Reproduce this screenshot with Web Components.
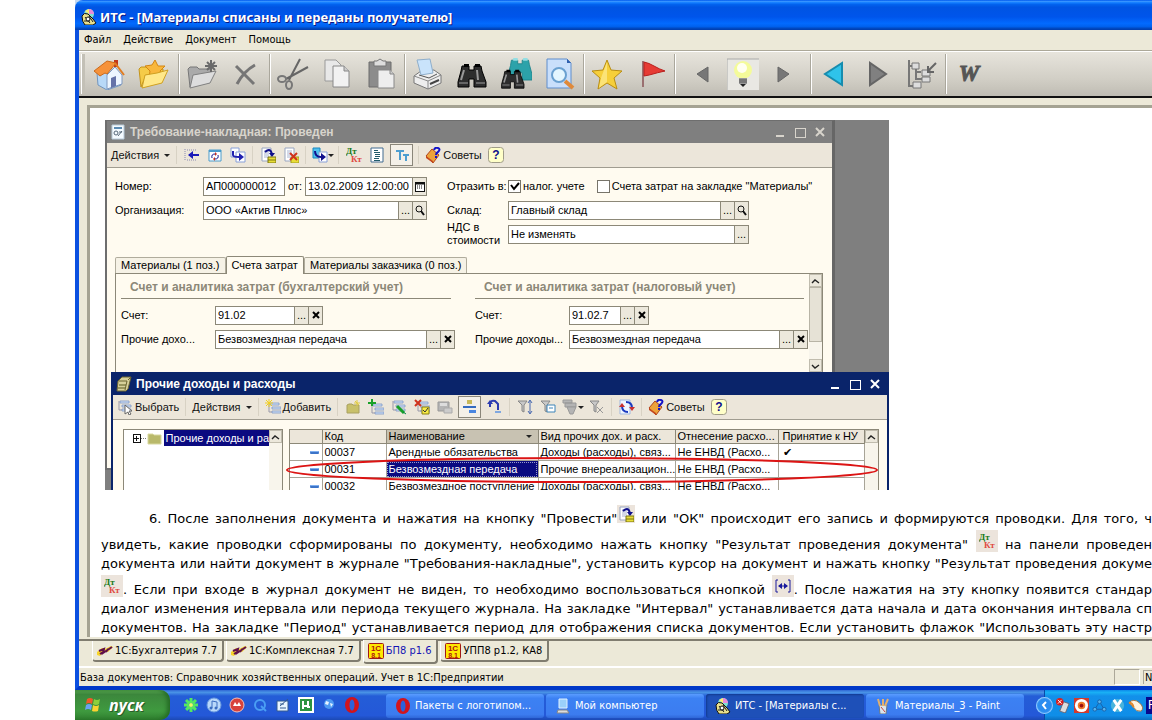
<!DOCTYPE html>
<html lang="ru">
<head>
<meta charset="utf-8">
<title>ИТС - [Материалы списаны и переданы получателю]</title>
<style>
  body {
    margin: 0;
    background: #fff;
    overflow: hidden;
  }
</style>
</head>
<body>
<its-desktop>
  <its-window>
    <its-toolbar slot="toolbar"></its-toolbar>
    <its-article>
      <demo-screen>
        <c1-window slot="back" icon="form" caption="Требование-накладная: Проведен">
          <c1-tools slot="tools">
            <c1-tool label="Действия" arrow></c1-tool><hr>
            <c1-tool icon="back" title="Назад"></c1-tool>
            <c1-tool icon="reread" title="Перечитать"></c1-tool>
            <c1-tool icon="copydoc" title="Скопировать"></c1-tool><hr>
            <c1-tool icon="post" title="Провести"></c1-tool>
            <c1-tool icon="unpost" title="Отмена проведения"></c1-tool><hr>
            <c1-tool icon="basis" title="Ввести на основании" arrow></c1-tool><hr>
            <c1-tool icon="dtkt" title="Результат проведения"></c1-tool>
            <c1-tool icon="list" title="Журнал"></c1-tool>
            <c1-tool icon="tt" title="Настройка" active></c1-tool><hr>
            <c1-tool icon="advice" label="Советы"></c1-tool>
            <c1-tool icon="help" title="Справка"></c1-tool>
          </c1-tools>
          <invoice-form></invoice-form>
        </c1-window>
        <c1-window slot="front" icon="book" caption="Прочие доходы и расходы" current>
          <c1-tools slot="tools">
            <c1-tool icon="choose" label="Выбрать"></c1-tool><hr>
            <c1-tool label="Действия" arrow></c1-tool><hr>
            <c1-tool icon="addrow" label="Добавить"></c1-tool><hr>
            <c1-tool icon="newfolder" title="Новая группа"></c1-tool>
            <c1-tool icon="addcopy" title="Добавить копированием"></c1-tool>
            <c1-tool icon="edit" title="Изменить"></c1-tool>
            <c1-tool icon="mark" title="Пометить на удаление"></c1-tool>
            <c1-tool icon="save" title="Записать"></c1-tool>
            <c1-tool icon="tree" title="Иерархия" active></c1-tool>
            <c1-tool icon="move" title="Переместить"></c1-tool><hr>
            <c1-tool icon="filtersort" title="Отбор и сортировка"></c1-tool>
            <c1-tool icon="filterval" title="Отбор по значению"></c1-tool>
            <c1-tool icon="filterhist" title="История отборов" arrow></c1-tool>
            <c1-tool icon="filteroff" title="Отключить отбор"></c1-tool><hr>
            <c1-tool icon="refresh" title="Обновить"></c1-tool><hr>
            <c1-tool icon="advice" label="Советы"></c1-tool>
            <c1-tool icon="help" title="Справка"></c1-tool>
          </c1-tools>
          <income-list></income-list>
        </c1-window>
      </demo-screen>
    </its-article>
    <its-tabs slot="tabs"></its-tabs>
  </its-window>
  <xp-taskbar slot="taskbar"></xp-taskbar>
</its-desktop>

<script>
// Icons: [viewBox size, markup]
const FUNNEL = `<path d="M1 2h9L7 6v7l-2-1V6z" fill="#c8c8c8" stroke="#888"/>`;
const ROWS = `<path d="M3 2h9v2H3zM5 6h9v2H5zM5 10h9v2H5z" fill="#cfe0f6" stroke="#7f97c6" stroke-width=".8"/><path d="M2 2v9h3" fill="none" stroke="#99a"/>`;
const SHEET = `<path d="M2 1h9v13H2z" fill="#fff" stroke="#99a6c0"/><path d="M4 4h5M4 6h5M4 8h5M4 10h5" stroke="#a9b4d0"/>`;
const BINOC = `<path d="M6 8h7v4h5V8h7l1 5 4 11v5H18v-8h-5v8H2v-5l3-11z" fill="#2d2d2d" stroke="#000"/><path d="M8 6h5v3H8zM19 6h5v3h-5z"/><path d="M5 22l3-10M22 22l-1-10" stroke="#999" stroke-width="2"/><path d="M3 25h9M20 25h9" stroke="#666" stroke-width="2"/>`;
const DETECTIVE = `<circle cx="8" cy="5" r="5" fill="#7fe0d0"/><path d="M8 0a5 5 0 0 1 5 5H8z" fill="#e98ad8"/><path d="M8 0v5L4 2z" fill="#ffec70"/><path d="M1 7q2-4 6-2l5 5 3 4-3 2H4q-3-3-3-9z" fill="#e8df8c" stroke="#111"/><path d="M4 8l5 6M8 7l4 6M3 12h6" stroke="#222"/><circle cx="7" cy="10" r="2" fill="#fff" stroke="#111"/>`;

const ICONS = {
  its: [16, DETECTIVE],
  home: [32, `<path d="M4 15l13-5 11 6v11l-14 5-9-5z" fill="#b8d9f8" stroke="#7295bd"/><path d="M14 17l8-8 7 8v9l-15 5z" fill="#eef6ff" stroke="#8099c0"/><path d="M21 2h4v7h-4z" fill="#c2371b"/><path d="M1 13L14 3l9 2-9 11-2-1-5 3z" fill="#f6923a" stroke="#cc6a1a"/><path d="M22 5l9 12" stroke="#e07c22" stroke-width="2"/><path d="M18 20l5-2v10l-5 2z" fill="#6673a8"/>`],
  favorites: [32, `<path d="M2 11l2-2h7l2 2h13v6H9L4 29z" fill="#f5cb48" stroke="#c4941c"/><path d="M18 2l3 6h7l-5 5 3 6-8-3-6 4 1-7-5-5 7-1z" fill="#f8b73c" stroke="#d48612"/><path d="M8 17l12-2 11-3-6 13-20 5z" fill="#ffe889" stroke="#d0a020"/>`],
  newfolder32: [32, `<path d="M2 11l2-2h7l2 2h12v6H9L4 29z" fill="#aaa" stroke="#777"/><path d="M7 17l23-4-6 12-20 5z" fill="#ddd" stroke="#808080"/><path d="M25 2v12M19 8h12M21 4l8 8M29 4l-8 8" stroke="#6a6a6a" stroke-width="2"/>`],
  remove: [32, `<path d="M6 8q8 8 18 18M25 7Q14 13 7 26" stroke="#767676" stroke-width="3" fill="none"/>`],
  cut: [32, `<path d="M23 1L12 22M31 9L9 21" stroke="#666" stroke-width="2"/><ellipse cx="5" cy="21" rx="4" ry="3" fill="none" stroke="#777" stroke-width="2"/><ellipse cx="12" cy="27" rx="3" ry="4" fill="none" stroke="#777" stroke-width="2"/>`],
  copy: [32, `<path d="M4 2h11l5 5v16H4z" fill="#e8e8e8" stroke="#999"/><path d="M12 8h11l5 5v16H12z" fill="#f2f2f2" stroke="#888"/><path d="M23 8v5h5" fill="#ccc" stroke="#888"/>`],
  paste: [32, `<path d="M4 4h22v25H4z" fill="#8c8c8c" stroke="#6d6d6d"/><path d="M9 3h3l3-2 3 2h3v5H9z" fill="#ddd" stroke="#777"/><path d="M13 12h12l4 4v14H13z" fill="#eee" stroke="#888"/><path d="M25 12v4h4" fill="#ccc" stroke="#888"/>`],
  print: [32, `<path d="M2 18l7-5 13-1 7 5v8l-13 6-14-6z" fill="#eee" stroke="#777"/><path d="M5 2l13-1 3 14-12 2z" fill="#c9e3fb" stroke="#8eaecb"/><path d="M2 18l14 5 13-6M16 23v8" fill="none" stroke="#888"/><path d="M7 17l10 3 8-4" stroke="#555" fill="none"/><path d="M18 26l9-4" stroke="#444" stroke-width="2"/>`],
  find: [32, BINOC],
  findall: [32, `<g transform="translate(6,-5) scale(.9)" opacity=".9"><path d="M6 8h7v4h5V8h7l1 5 3 11v6H18v-8h-5v8H2v-5l3-11z" fill="#1a9da6" stroke="#0a7c86"/><path d="M8 7h5M19 7h5" stroke="#8be0e6" stroke-width="3"/></g><g transform="translate(0,7) scale(.8)">${BINOC}</g>`],
  preview: [32, `<path d="M3 1h20l4 4v25H3z" fill="#c9dffb" stroke="#5f8dcc"/><path d="M23 1v4h4z" fill="#2f5fae"/><circle cx="15" cy="17" r="7" fill="#e4f6ff" stroke="#6aa0d0" stroke-width="2"/><path d="M21 23l8 7" stroke="#e08a3a" stroke-width="4"/>`],
  star: [32, `<path d="M16 2l4 10 11 1-8 7 3 11-10-6-9 6 2-11-8-7 11-1z" fill="#f6cf3a" stroke="#b98d12"/><path d="M16 4v20l-8 6 2-10z" fill="#fff0a0" opacity=".6"/>`],
  flag: [32, `<path d="M8 3v26" stroke="#9a7070" stroke-width="2"/><path d="M9 4q5 1 10 4 5 3 11 5-9 2-12 3t-9 2z" fill="#e63b34" stroke="#b81f1d"/>`],
  prev: [32, `<path d="M21 9v15L10 16z" fill="#777" stroke="#666"/>`],
  bulb: [32, `<path d="M0 1h32v31H0z" fill="#e9e8e3"/><path d="M0 32V1h32" fill="none" stroke="#aaa"/><circle cx="16" cy="12" r="9" fill="#f4fb9a"/><circle cx="15" cy="10" r="5" fill="#fffff0"/><path d="M12 20h8v6h-8z" fill="#9a9a9a"/><path d="M12 22h8M12 24h8" stroke="#555"/><path d="M13 26h6l-3 3z" fill="#222"/>`],
  next: [32, `<path d="M11 9v15l11-8z" fill="#777" stroke="#666"/>`],
  goback: [32, `<path d="M24 5v22L7 16z" fill="#2fc3ea" stroke="#168cae" stroke-width="2"/>`],
  goforward: [32, `<path d="M8 5v22l16-11z" fill="#808080" stroke="#656565" stroke-width="2"/>`],
  sync: [32, `<path d="M3 2v26h5M3 8h4M10 11v10h6M10 14h5" fill="none" stroke="#777" stroke-width="2"/><path d="M6 5h7v6H6zM16 12h8v6h-8zM16 19h8v5h-8zM7 24h8v6H7z" fill="#ddd" stroke="#777"/><path d="M30 5l-8 8M22 8v6h6" stroke="#666" stroke-width="2" fill="none"/>`],
  word: [32, `<text x="16" y="23" text-anchor="middle" font-family="Liberation Serif, serif" font-weight="bold" font-style="italic" font-size="23" fill="#555" stroke="#555">W</text>`],
  form: [16, `<path d="M2 1h12v14H2z" fill="#f4faff" stroke="#b8cad8"/><path d="M4 4h8" stroke="#5b8bb3" stroke-width="2"/><circle cx="6" cy="9" r="2" fill="none" stroke="#567"/><path d="M8 12l4-5M9 8h3" stroke="#567"/>`],
  book: [16, `<path d="M2 5l4-4h9l-3 12-2 2H1z" fill="#d6d09a" stroke="#6b6430"/><path d="M3 5h8L9 14M12 4l3-3" stroke="#6b6430" fill="none"/><path d="M3 9h7M2 12h7" stroke="#5b5b20"/>`],
  back: [16, `<path d="M1 2v12M3 3h9M3 13h9" stroke="#8a8ab0" stroke-dasharray="1 1"/><path d="M15 8H5" stroke="#1818b8" stroke-width="2"/><path d="M9 4L4 8l5 4z" fill="#1818b8"/>`],
  reread: [16, `<path d="M2 3h12v11H2z" fill="#fff" stroke="#4a9ccc"/><path d="M2 3h12v2H2z" fill="#4a9ccc"/><path d="M5 11q-1-4 3-4M11 8q1 4-3 4" fill="none" stroke="#14148c"/><path d="M8 5l2 2-2 2zM8 14l-2-2 2-2z" fill="#c03020"/>`],
  copydoc: [16, `<path d="M1 1h8v9H1z" fill="#fff" stroke="#88a0d8"/><path d="M6 5h9v10H6z" fill="#fff" stroke="#88a0d8"/><path d="M3 4v4q0 2 6 2" fill="none" stroke="#2121b0" stroke-width="2"/><path d="M9 6l5 4-5 4z" fill="#2121b0"/>`],
  post: [16, `${SHEET}<path d="M5 5q6-5 7 3" fill="none" stroke="#10108c" stroke-width="2"/><path d="M9 6h6l-3 4z" fill="#10108c"/><path d="M8 10h8v6H8z" fill="#e8de38" stroke="#7a7510"/><path d="M8 13h8" stroke="#7a7510"/>`],
  unpost: [16, `${SHEET}<path d="M8 10h8v6H8z" fill="#e8de38" stroke="#a09a20"/><path d="M7 6l7 7M14 6l-7 7" stroke="#d0321c" stroke-width="2"/>`],
  basis: [16, `<path d="M1 1h7v10H1z" fill="#4fc0ee" stroke="#1a86be"/><path d="M7 5h8v10H7z" fill="#fff" stroke="#88a0d8"/><path d="M3 4q0 6 6 6" fill="none" stroke="#10108c" stroke-width="2"/><path d="M9 6l5 4-5 4z" fill="#10108c"/>`],
  dtkt: [16, `<text x="0" y="7" font-family="Liberation Serif, serif" font-weight="bold" font-size="9" fill="#197a19">Дт</text><text x="5" y="15" font-family="Liberation Serif, serif" font-weight="bold" font-size="9" fill="#e04a42">Кт</text>`],
  list: [16, `<path d="M2 1h12v14H2z" fill="#fff" stroke="#406a90"/><path d="M5 3.500h4M5 5.500h6M6 7.500h5M6 9.500h5M5 11.500h5M5 13.500h6" stroke="#205a6a"/>`],
  tt: [16, `<path d="M2 4h8M6 4v9M9 8h6M12 8v6" stroke="#4d9ed0" stroke-width="2" fill="none"/>`],
  advice: [16, `<path d="M1 9l6-7 7 6-6 8z" fill="#eda23a" stroke="#b0441c"/><path d="M1 9v2l7 5v-2z" fill="#c44820"/><path d="M9 3q1-3 4-2t0 4q-2 1-2 3" fill="none" stroke="#1414c8" stroke-width="2"/><path d="M10 9h2v2h-2z" fill="#1414c8"/>`],
  help: [16, `<rect x=".5" y=".5" width="15" height="15" rx="3" fill="#ffffc8" stroke="#a09c88"/><text x="8" y="12" text-anchor="middle" font-family="Liberation Sans, sans-serif" font-weight="bold" font-size="12" fill="#10108c">?</text>`],
  choose: [16, `${ROWS}<path d="M8 6l7 6h-3l2 3-2 1-1-3-3 2z" fill="#fff" stroke="#666"/>`],
  addrow: [16, `<g transform="translate(2,2)">${ROWS}</g><path d="M4 0v8M0 4h8M1 1l6 6M7 1L1 7" stroke="#f2cf20"/>`],
  newfolder: [16, `<path d="M2 6l2-1h3l1 1h6v8H2z" fill="#c8c06a" stroke="#a8a060"/><path d="M12 1v6M9 4h6M10 2l4 4" stroke="#e0cb40"/>`],
  addcopy: [16, `<g transform="translate(2,3)">${ROWS}</g><path d="M4 0v7M0 4h8" stroke="#18a028" stroke-width="2"/>`],
  edit: [16, `${ROWS}<path d="M6 7l7 7" stroke="#18a028" stroke-width="3"/><path d="M12 13l3 2" stroke="#084"/>`],
  mark: [16, `<g transform="translate(2,1)">${ROWS}</g><path d="M1 1l6 6M7 1L1 7" stroke="#d0321c" stroke-width="2"/><path d="M8 8h7v7H8z" fill="#f8ec48" stroke="#8a8010"/><path d="M9 11l2 2 3-4" stroke="#333" fill="none"/>`],
  save: [16, `<path d="M1 3h11v9H1z" fill="#b5b5b5" stroke="#999"/><path d="M3 4h7v3H3z" fill="#ddd"/><path d="M7 9h8v5H7z" fill="#ccc" stroke="#aaa"/>`],
  tree: [16, `<path d="M5 1h5v4H5z" fill="#c8b958"/><path d="M1 8h13" stroke="#356bc0" stroke-width="2"/><path d="M7 11h7v3H7z" fill="#4a86e0"/>`],
  move: [16, `<path d="M3 8V5q0-4 5-3l3 3v6" fill="none" stroke="#2a3ab0" stroke-width="2"/><path d="M0 5l3-4 3 4z" fill="#2a3ab0"/><path d="M8 12h6v2H8z" fill="#80a8e0"/>`],
  filtersort: [16, `${FUNNEL}<path d="M13 2v12M11 4l2-3 2 3M11 12l2 3 2-3" fill="none" stroke="#4868b0"/>`],
  filterval: [16, `${FUNNEL}<path d="M7 6h8v7H7z" fill="#fff" stroke="#3c84b8"/><path d="M9 9h4" stroke="#3c84b8"/>`],
  filterhist: [16, `<path d="M1 1h9v3H1zM3 4h11v4H3z" fill="#b4b4b4" stroke="#999"/><path d="M5 8h9l-3 7H8z" fill="#b4b4b4" stroke="#999"/>`],
  filteroff: [16, `${FUNNEL}<path d="M8 8l6 6M14 8l-6 6" stroke="#999"/>`],
  refresh: [16, `<path d="M1 1h10v14H1z" fill="#f0f6ff" stroke="#a0b8e0"/><path d="M7 3q6 0 6 6M9 13q-6 0-6-6" fill="none" stroke="#1a3ac0" stroke-width="2"/><path d="M10 8h6l-3 4z" fill="#c83030"/><path d="M0 8h6L3 4z" fill="#c83030"/>`],
  calendar: [11, `<path d="M1 1h9v9H1z" fill="#fff" stroke="#111" shape-rendering="crispEdges"/><path d="M1 2.500h9" stroke="#111" stroke-width="2"/><path d="M3 5h1M5 5h1M7 5h1M3 7h1M5 7h1M7 7h1" stroke="#111"/>`],
  lens: [11, `<circle cx="5" cy="4" r="3" fill="none" stroke="#111"/><path d="M7 6l3 4" stroke="#111" stroke-width="2"/>`],
  up: [11, `<path d="M2 7l3-3 4 3" fill="none" stroke="#222" stroke-width="1.4"/>`],
  down: [11, `<path d="M2 4l3 3 4-3" fill="none" stroke="#222" stroke-width="1.4"/>`],
  folder: [16, `<path d="M2 4h5l1 1h7v9H2z" fill="#b9b96b" stroke="#d8d8a0"/>`],
  period: [16, `<path d="M3 2H1v12h2M13 2h2v12h-2M4 8h8" fill="none" stroke="#1a1a9c"/><path d="M7 5L3 8l4 3zM9 5l4 3-4 3z" fill="#1a1a9c"/>`],
  v77: [16, `<path d="M0 9l5-4 3 1 6-3 2 1-5 5-4-1-4 5-3-1z" fill="#f7d42a"/><path d="M2 8l5-2-1 4 3-2 6-4M3 11l3-2M9 9l2-3" stroke="#60104a" stroke-width="2" fill="none"/>`],
  v81: [16, `<rect x=".5" y=".5" width="15" height="15" rx="1" fill="#ffe800" stroke="#a01818"/><text x="8" y="8" text-anchor="middle" font-family="Liberation Sans, sans-serif" font-weight="bold" font-size="8" fill="#b01010">1С</text><text x="8" y="15" text-anchor="middle" font-family="Liberation Sans, sans-serif" font-weight="bold" font-size="7" fill="#b01010">8.1</text>`],
  windows: [20, `<path d="M3 4q3-2 6 0L8 9Q5 7 2 9z" fill="#f0592a"/><path d="M10 4q3 2 6 0l-1 5q-3 2-6 0z" fill="#8ccf3c"/><path d="M2 10q3-2 6 0l-1 5q-3-2-6 0z" fill="#6aa2f4"/><path d="M9 10q3 2 6 0l-1 6q-3 1-6 0z" fill="#fad230"/>`],
  icq: [16, `<g stroke="#54e860" stroke-width="3" stroke-dasharray="5 4"><path d="M8 1v14M1 8h14M3 3l10 10M13 3L3 13"/></g><circle cx="8" cy="8" r="2" fill="#eaff60"/>`],
  itunes: [16, `<circle cx="8" cy="8" r="7" fill="#b9d8fa" stroke="#6a9ae0"/><path d="M6 11V4l5 1v6" stroke="#3a6cc0" fill="none"/><circle cx="5" cy="11" r="1.500" fill="#3a6cc0"/><circle cx="10" cy="11" r="1.500" fill="#3a6cc0"/>`],
  miranda: [16, `<circle cx="8" cy="8" r="7" fill="#d8423c" stroke="#f4c0b8"/><path d="M4 9l2-4 2 3 2-3 2 4z" fill="#fff"/>`],
  quick: [16, `<circle cx="8" cy="8" r="5" fill="none" stroke="#4a9ef4" stroke-width="2"/><path d="M9 9l5 5" stroke="#4a9ef4" stroke-width="2"/>`],
  desk: [16, `<path d="M2 4h11v10H2z" fill="#e8f4ff" stroke="#345a90"/><path d="M5 9l8-7M5 7h4M5 11h6" stroke="#345a90"/>`],
  utorrent: [16, `<path d="M0 0h16v16H0z" fill="#fff"/><path d="M2 2h12v12H2z" fill="#2c9440"/><path d="M5 4v8M5 9h5M10 4v6h2" fill="none" stroke="#fff" stroke-width="2"/>`],
  earth: [16, `<circle cx="8" cy="7" r="5" fill="#4f9af2"/><path d="M5 4l3 1-1 3-3-1zM9 6l3 1-2 3z" fill="#e8f4ff"/>`],
  opera: [16, `<ellipse cx="8" cy="8" rx="7" ry="8" fill="#d2141c"/><ellipse cx="8" cy="8" rx="2.500" ry="5.500" fill="#2b62dc"/>`],
  computer: [16, `<path d="M4 1h8v9H4z" fill="#9ad0fa" stroke="#e0f0ff"/><path d="M3 12h9l2 3H2z" fill="#ddd" stroke="#888"/>`],
  paint: [16, `<path d="M4 7h8l-1 9H5z" fill="#d8e4ec" stroke="#678"/><path d="M5 8L3 1M8 8V1M10 8l3-7" stroke="#e0b070" stroke-width="2"/><path d="M6 9l4 5" stroke="#c84040"/>`],
  usb: [16, `<path d="M4 14l4-10 6 2-4 10z" fill="#ddd" stroke="#667"/><circle cx="4" cy="4" r="4" fill="#d82020"/><path d="M2 2l4 4M6 2L2 6" stroke="#fff"/>`],
  target: [16, `<path d="M0 0h16v16H0z" fill="#d23a2c"/><circle cx="8" cy="8" r="7" fill="#fff"/><circle cx="8" cy="8" r="4" fill="#ef7b2c"/><circle cx="8" cy="8" r="2" fill="#a01010"/>`],
  nodes: [16, `<path d="M8 4L3 12h10z" fill="none" stroke="#1860a8"/><g fill="#5ab4ec" stroke="#1860a8"><circle cx="8" cy="4" r="2"/><circle cx="3" cy="12" r="2"/><circle cx="13" cy="12" r="2"/></g>`],
  xbox: [16, `<circle cx="8" cy="8" r="7" fill="#49b4dc"/><path d="M4 2l8 12M12 2L4 14" stroke="#fff" stroke-width="3"/>`],
  shell: [16, `<path d="M1 5q5-5 11 0t2 9q-5 1-8-4z" fill="#fff3e0" stroke="#a87440"/><path d="M1 5q4 0 5 5" stroke="#e08830" fill="none" stroke-width="2"/>`]
};

class AppIcon extends HTMLElement {
  constructor() {
    super();
    this.attachShadow({ mode: "open" });
  }

  connectedCallback() {
    const [box, art] = ICONS[this.getAttribute("name")];
    const size = this.getAttribute("size") || box;
    this.shadowRoot.innerHTML = `
      <style>
        :host { display: inline-block; flex: none; line-height: 0; }
        svg { display: block; }
      </style>
      <svg width="${size}" height="${size}" viewBox="0 0 ${box} ${box}" aria-hidden="true">${art}</svg>
    `;
  }
}

class ItsDesktop extends HTMLElement {
  constructor() {
    super();
    this.attachShadow({ mode: "open" });
    this.shadowRoot.innerHTML = `
      <style>
        :host {
          display: flex;
          flex-direction: column;
          height: 100vh;
          margin-left: 75px;
          font: 11px/14px "DejaVu Sans Condensed", "Noto Sans", sans-serif;
          color: #000;
        }
        ::slotted(its-window) { flex: 1; min-height: 0; }
      </style>
      <slot></slot>
      <slot name="taskbar"></slot>
    `;
  }
}

class ItsWindow extends HTMLElement {
  constructor() {
    super();
    this.attachShadow({ mode: "open" });
    this.shadowRoot.innerHTML = `
      <style>
        :host { display: flex; flex-direction: column; background: #c4d8f0; }
        header {
          display: flex;
          align-items: center;
          gap: 3px;
          height: 30px;
          padding: 4px 6px 0;
          box-sizing: border-box;
          border-radius: 8px 0 0 0;
          background: linear-gradient(#0058ee, #3593ff 5%, #127dff 9%, #0262ee 15%, #0054e3 24%, #0055eb 56%, #026afe 78%, #0062ef 88%, #0044b8 96%, #003cae);
          color: #fff;
          text-shadow: 1px 1px #0a1883;
        }
        h1 { margin: 0; font: bold 13px/18px "Noto Sans", sans-serif; white-space: nowrap; }
        .frame {
          flex: 1;
          min-height: 0;
          display: flex;
          flex-direction: column;
          border-left: 4px solid #0b50e0;
          border-bottom: 4px solid #0038c8;
          background: #ece9d8;
        }
        nav { display: flex; gap: 12px; height: 20px; padding-left: 5px; border-bottom: 1px solid #aca899; }
        nav button { border: 0; padding: 0; background: none; font: inherit; color: inherit; }
        .view {
          flex: 1;
          min-height: 0;
          display: flex;
          margin: 7px 0 2px 8px;
          border-top: 3px solid #a5a393;
          border-left: 3px solid #a5a393;
          background: #fff;
        }
        ::slotted(its-article) { flex: 1; min-width: 0; }
        footer {
          display: flex;
          align-items: center;
          gap: 3px;
          height: 18px;
          border-top: 2px solid #fff;
        }
        footer span { flex: 1; padding: 2px 0 0 1px; white-space: nowrap; }
        footer i { width: 24px; height: 14px; border: 1px solid #aca899; border-color: #aca899 #fff #fff #aca899; }
        footer b { width: 9px; height: 14px; border-top: 1px solid #aca899; border-left: 1px solid #aca899; font-weight: normal; overflow: hidden; padding-left: 1px; box-sizing: border-box; }
      </style>
      <header><app-icon name="its"></app-icon><h1>ИТС - [Материалы списаны и переданы получателю]</h1></header>
      <div class="frame">
        <nav>
          <button>Файл</button><button>Действие</button><button>Документ</button><button>Помощь</button>
        </nav>
        <slot name="toolbar"></slot>
        <div class="view"><slot></slot></div>
        <slot name="tabs"></slot>
        <footer><span>База документов: Справочник хозяйственных операций. Учет в 1С:Предприятии</span><i></i><b>N</b></footer>
      </div>
    `;
  }
}

class ItsToolbar extends HTMLElement {
  constructor() {
    super();
    this.attachShadow({ mode: "open" });
    const groups = [
      ["home", "favorites"], ["newfolder32", "remove"], ["cut", "copy", "paste"],
      ["print", "find", "findall", "preview"], ["star", "flag"], ["prev", "bulb", "next"],
      ["goback", "goforward", "sync"], ["word"]
    ];
    this.shadowRoot.innerHTML = `
      <style>
        :host {
          display: flex;
          height: 44px;
          padding-left: 2px;
          border-top: 1px solid #fff;
          border-bottom: 2px solid #111;
          background: linear-gradient(#e7e4dc, #d2cfc6 60%, #bfbcb3);
        }
        .grip { width: 3px; margin: 2px 2px 2px 0; border-left: 1px solid #fff; background: #c3c0b6; }
        .group { display: flex; align-items: center; margin: 2px 0; border-right: 1px solid #fff; box-shadow: inset -1px 0 #aaa79c; padding-right: 2px; }
        .group:last-child { border: 0; box-shadow: none; }
        .group.hist { padding: 0 8px 0 7px; }
        .group:nth-child(2), .group:nth-child(3) { padding-right: 4px; }
        button { display: flex; align-items: center; justify-content: center; width: 44px; height: 38px; padding: 0; border: 0; background: none; }
        .hist button { width: 40px; }
      </style>
      <div class="grip"></div>
      ${groups.map((g) => `<div class="group${g[0] === "prev" ? " hist" : ""}">${g.map((n) => `<button aria-label="${n}"><app-icon name="${n}"></app-icon></button>`).join("")}</div>`).join("")}
    `;
  }
}

class ItsArticle extends HTMLElement {
  constructor() {
    super();
    this.attachShadow({ mode: "open" });
    this.shadowRoot.innerHTML = `
      <style>
        :host { display: block; padding: 12px 0 0 11px; overflow: hidden; }
        ::slotted(demo-screen) { margin-left: 4px; }
        .text {
          display: flex;
          flex-direction: column;
          gap: 4px;
          margin-top: 21px;
          font: 13px/15px "DejaVu Sans", sans-serif;
        }
        p { margin: 0; text-align: justify; text-align-last: justify; white-space: nowrap; }
        .first { padding-left: 48px; }
        app-icon { padding: 3px; background: #ece4dc; vertical-align: -3px; }
        .first app-icon { padding: 1px; margin-top: -6px; vertical-align: baseline; }
      </style>
      <slot></slot>
      <div class="text">
        <p class="first">6. После заполнения документа и нажатия на кнопку "Провести"<app-icon name="post"></app-icon> или "ОК" происходит его запись и формируются проводки. Для того, ч</p>
        <p>увидеть, какие проводки сформированы по документу, необходимо нажать кнопку "Результат проведения документа" <app-icon name="dtkt"></app-icon> на панели проведен</p>
        <p>документа или найти документ в журнале "Требования-накладные", установить курсор на документ и нажать кнопку "Результат проведения докуме</p>
        <p><app-icon name="dtkt"></app-icon>. Если при входе в журнал документ не виден, то необходимо воспользоваться кнопкой <app-icon name="period"></app-icon>. После нажатия на эту кнопку появится стандар</p>
        <p>диалог изменения интервала или периода текущего журнала. На закладке "Интервал" устанавливается дата начала и дата окончания интервала сп</p>
        <p>документов. На закладке "Период" устанавливается период для отображения списка документов. Если установить флажок "Использовать эту настр</p>
      </div>
    `;
  }
}

// Desktop with two overlapping windows
class DemoScreen extends HTMLElement {
  constructor() {
    super();
    this.attachShadow({ mode: "open" });
    this.shadowRoot.innerHTML = `
      <style>
        :host {
          display: block;
          position: relative;
          width: 784px;
          height: 370px;
          overflow: hidden;
          background: #7f7f7f;
          font: 11px/13px "Liberation Sans", Arial, sans-serif;
        }
        ::slotted(c1-window) { position: absolute; }
        ::slotted([slot="back"]) { top: 0; left: 0; width: 730px; height: 350px; }
        ::slotted([slot="front"]) { top: 252px; left: 6px; right: 0; height: 140px; }
        svg { position: absolute; left: 180px; top: 337px; }
      </style>
      <slot name="back"></slot>
      <slot name="front"></slot>
      <svg width="596" height="28" viewBox="0 0 596 28"><ellipse cx="297" cy="13" rx="295" ry="12" fill="none" stroke="#dc1414" stroke-width="2"/></svg>
    `;
  }
}

class C1Window extends HTMLElement {
  constructor() {
    super();
    this.attachShadow({ mode: "open" });
  }

  connectedCallback() {
    this.shadowRoot.innerHTML = `
      <style>
        :host {
          display: flex;
          flex-direction: column;
          box-sizing: border-box;
          border: 2px solid #6e6e6e;
          border-top-width: 1px;
          border-right: 3px solid #666;
          background: #fffbf0;
          --bar: #7f7f7f;
          --ink: #d8d4cc;
        }
        :host([current]) { border-color: #0a246a; border-right-width: 2px; --bar: #0a246a; --ink: #fff; }
        header { display: flex; align-items: center; gap: 4px; height: 22px; padding: 0 2px 0 3px; background: var(--bar); color: var(--ink); }
        h2 { flex: 1; margin: 0; font: bold 12px/14px "Liberation Sans", sans-serif; }
        .controls { display: flex; }
        header button { width: 20px; height: 16px; padding: 0; border: 0; background: none; color: inherit; }
        svg { display: block; margin: auto; }
      </style>
      <header>
        <app-icon name="${this.getAttribute("icon")}"></app-icon>
        <h2>${this.getAttribute("caption")}</h2>
        <div class="controls">
          <button aria-label="Свернуть"><svg width="12" height="12"><path d="M2 10h8" stroke="currentColor" stroke-width="2"/></svg></button>
          <button aria-label="Развернуть"><svg width="12" height="12" shape-rendering="crispEdges"><path d="M1 2h10v9H1z" fill="none" stroke="currentColor"/></svg></button>
          <button aria-label="Закрыть"><svg width="12" height="12"><path d="M2 2l8 8M10 2l-8 8" stroke="currentColor" stroke-width="2"/></svg></button>
        </div>
      </header>
      <slot name="tools"></slot>
      <slot></slot>
    `;
  }
}

class C1Tools extends HTMLElement {
  constructor() {
    super();
    this.attachShadow({ mode: "open" });
    this.shadowRoot.innerHTML = `
      <style>
        :host { display: flex; align-items: center; height: 24px; padding-left: 1px; background: #ece6da; border-bottom: 1px solid #a09c90; }
        ::slotted(hr) { width: 1px; height: 18px; margin: 0 3px; border: 0; background: #d8d2c4; }
      </style>
      <slot></slot>
    `;
  }
}

class C1Tool extends HTMLElement {
  constructor() {
    super();
    this.attachShadow({ mode: "open" });
  }

  connectedCallback() {
    const icon = this.getAttribute("icon");
    const label = this.getAttribute("label") || "";
    this.shadowRoot.innerHTML = `
      <style>
        :host { display: flex; }
        :host([active]) { margin: 0 2px; }
        button {
          display: flex;
          align-items: center;
          justify-content: center;
          gap: 2px;
          min-width: 23px;
          height: 22px;
          padding: 0 3px;
          border: 0;
          background: none;
          font: inherit;
          color: #111;
        }
        :host([active]) button { border: 1px solid #8a867a; background: #f4f0e8; padding: 0 2px; }
        i { border: 3px solid transparent; border-top-color: #222; border-bottom: 0; }
        app-icon + i { margin: 0 -2px; }
        span + i { margin-left: 3px; }
      </style>
      <button${label ? "" : ` aria-label="${this.title}"`}>${icon ? `<app-icon name="${icon}"></app-icon>` : ""}${label ? `<span>${label}</span>` : ""}${this.hasAttribute("arrow") ? "<i></i>" : ""}</button>
    `;
  }
}

// Labelled text box with its little buttons
class C1Field extends HTMLElement {
  constructor() {
    super();
    this.attachShadow({ mode: "open" });
  }

  connectedCallback() {
    const faces = {
      dots: "...",
      clear: `<svg width="8" height="8"><path d="M1 1l6 6M7 1L1 7" stroke="#000" stroke-width="2"/></svg>`,
      lens: `<app-icon name="lens"></app-icon>`,
      calendar: `<app-icon name="calendar"></app-icon>`
    };
    const buttons = (this.getAttribute("buttons") || "").split(" ").filter(Boolean);
    this.shadowRoot.innerHTML = `
      <style>
        :host { display: flex; align-items: center; height: 18px; }
        label { flex: none; width: var(--label, 88px); }
        .box { flex: 1; min-width: 0; display: flex; height: 19px; box-sizing: border-box; border: 1px solid #8c8878; background: #fff; }
        input { flex: 1; min-width: 0; width: 0; padding: 0 2px; border: 0; outline: 0; background: none; font: inherit; color: inherit; }
        button { display: flex; align-items: center; justify-content: center; width: 14px; padding: 0; border: 0; border-left: 1px solid #8c8878; background: #ece8dc; font: inherit; color: #000; }
      </style>
      <label for="value">${this.getAttribute("label")}</label>
      <div class="box">
        <input id="value" value="${this.getAttribute("value")}">
        ${buttons.map((b) => `<button aria-label="${b}">${faces[b]}</button>`).join("")}
      </div>
    `;
  }
}

class C1Check extends HTMLElement {
  constructor() {
    super();
    this.attachShadow({ mode: "open" });
  }

  connectedCallback() {
    this.shadowRoot.innerHTML = `
      <style>
        :host { display: block; }
        label { display: flex; align-items: center; gap: 2px; white-space: nowrap; }
        input { appearance: none; width: 13px; height: 13px; margin: 0; border: 1px solid #77746a; background: #fff; }
        input:checked { background: #fff url("data:image/svg+xml,%3Csvg xmlns='http://www.w3.org/2000/svg' width='11' height='11'%3E%3Cpath d='M2 4l3 4 5-6' fill='none' stroke='%23000' stroke-width='2'/%3E%3C/svg%3E"); }
      </style>
      <label><input type="checkbox"${this.hasAttribute("checked") ? " checked" : ""}>${this.getAttribute("label")}</label>
    `;
  }
}

class C1Scroll extends HTMLElement {
  constructor() {
    super();
    this.attachShadow({ mode: "open" });
    this.shadowRoot.innerHTML = `
      <style>
        :host { display: flex; flex-direction: column; width: 13px; background: #f8f5ec; }
        button { display: block; height: 13px; padding: 0; border: 1px solid #c0bcae; background: #ece8dc; }
        i { height: var(--thumb, 0); background: #e6e2d6; box-shadow: inset 0 0 0 1px #b8b4a6; }
        span { flex: 1; }
      </style>
      <button aria-label="Вверх"><app-icon name="up"></app-icon></button><i></i><span></span>
      <button aria-label="Вниз"><app-icon name="down"></app-icon></button>
    `;
  }
}

class InvoiceForm extends HTMLElement {
  constructor() {
    super();
    this.attachShadow({ mode: "open" });
    this.shadowRoot.innerHTML = `
      <style>
        :host { display: flex; flex-direction: column; flex: 1; min-height: 0; padding: 9px 9px 0 8px; }
        .head { display: grid; grid-template-columns: 312px 1fr; gap: 20px; }
        .col { display: flex; flex-direction: column; gap: 6px; }
        .row { display: flex; align-items: center; height: 18px; }
        .col.right { --label: 61px; }
        .right c1-field { width: 302px; }
        .number { width: 170px; }
        .date { flex: 1; --label: 17px; margin-left: 3px; }
        .row span { width: 61px; white-space: nowrap; }
        .row c1-check + c1-check { margin-left: 12px; }
        .tabs { display: flex; align-items: flex-end; height: 18px; margin-top: 12px; }
        .tabs button { height: 16px; padding: 0 5px; border: 1px solid #b0ac9c; border-bottom: 0; border-radius: 2px 2px 0 0; background: #f6f2e6; font: inherit; }
        .tabs .on { height: 18px; margin-bottom: -1px; background: #fffbf0; border-color: #8c8878; position: relative; }
        .panel { display: flex; height: 98px; border: 1px solid #8c8878; border-bottom: 0; }
        .pages { flex: 1; display: grid; grid-template-columns: 334px 333px; gap: 20px; padding-left: 5px; }
        h3 { margin: 0 4px 1px 0; height: 24px; padding-left: 9px; border-bottom: 1px solid #8c8878; font: bold 12px/26px "Liberation Sans", sans-serif; color: #8c8878; white-space: nowrap; }
        .pages .col { --label: 94px; }
        .short { width: 202px; }
        .col + .col .short { width: 174px; }
        c1-scroll { --thumb: 55px; }
      </style>
      <div class="head">
        <div class="col">
          <div class="row">
            <c1-field class="number" label="Номер:" value="АП000000012"></c1-field>
            <c1-field class="date" label="от:" value="13.02.2009 12:00:00" buttons="calendar"></c1-field>
          </div>
          <c1-field label="Организация:" value="ООО «Актив Плюс»" buttons="dots lens"></c1-field>
        </div>
        <div class="col right">
          <div class="row"><span>Отразить в:</span><c1-check label="налог. учете" checked></c1-check><c1-check label='Счета затрат на закладке "Материалы"'></c1-check></div>
          <c1-field label="Склад:" value="Главный склад" buttons="dots lens"></c1-field>
          <c1-field label="НДС в стоимости" value="Не изменять" buttons="dots"></c1-field>
        </div>
      </div>
      <div class="tabs" role="tablist">
        <button role="tab">Материалы (1 поз.)</button><button role="tab" class="on">Счета затрат</button><button role="tab">Материалы заказчика (0 поз.)</button>
      </div>
      <div class="panel">
        <div class="pages">
          <div class="col">
            <h3>Счет и аналитика затрат (бухгалтерский учет)</h3>
            <c1-field class="short" label="Счет:" value="91.02" buttons="dots clear"></c1-field>
            <c1-field label="Прочие дохо..." value="Безвозмездная передача" buttons="dots clear"></c1-field>
          </div>
          <div class="col">
            <h3>Счет и аналитика затрат (налоговый учет)</h3>
            <c1-field class="short" label="Счет:" value="91.02.7" buttons="dots clear"></c1-field>
            <c1-field label="Прочие доходы..." value="Безвозмездная передача" buttons="dots clear"></c1-field>
          </div>
        </div>
        <c1-scroll></c1-scroll>
      </div>
    `;
  }
}

class IncomeList extends HTMLElement {
  constructor() {
    super();
    this.attachShadow({ mode: "open" });
    const rows = [
      ["00037", "Арендные обязательства", "Доходы (расходы), связ...", "Не ЕНВД (Расхо...", "✔"],
      ["00031", "Безвозмездная передача", "Прочие внереализацион...", "Не ЕНВД (Расхо...", ""],
      ["00032", "Безвозмездное поступление", "Доходы (расходы), связ...", "Не ЕНВД (Расхо...", ""],
      ["", "", "", "", ""]
    ];
    this.shadowRoot.innerHTML = `
      <style>
        :host { display: flex; flex: 1; min-height: 0; gap: 6px; padding: 9px 8px 0 10px; overflow: hidden; }
        .tree, .list { display: flex; border: 1px solid #8c8878; background: #fff; box-sizing: border-box; }
        .tree { width: 160px; }
        .list { flex: 1; min-width: 0; }
        .node { flex: 1; min-width: 0; display: flex; align-items: center; height: 16px; overflow: hidden; white-space: nowrap; padding-left: 9px; }
        .node button { width: 9px; height: 9px; padding: 0; border: 1px solid #111; background: linear-gradient(#111, #111) center / 5px 1px no-repeat, linear-gradient(#111, #111) center / 1px 5px no-repeat, #fff; }
        .node i { width: 6px; border-top: 1px dotted #777; }
        .node span { flex: 1; margin-left: 2px; padding-left: 2px; line-height: 16px; background: #0a0a80; color: #fff; }
        table { flex: 1; width: 0; table-layout: fixed; border-collapse: collapse; align-self: flex-start; }
        th, td { height: 16px; padding: 0 2px; border: 0 solid #a8a498; border-width: 0 1px 1px 0; font-weight: normal; text-align: left; white-space: nowrap; overflow: hidden; line-height: 13px; }
        th { height: 13px; background: #ece6da; border-color: #8c8878; }
        th.sort { background: #c8c2b2; }
        th.sort span { display: flex; justify-content: space-between; align-items: center; padding-right: 4px; }
        th b { border: 3px solid transparent; border-top-color: #222; border-bottom: 0; }
        td:first-child { text-align: right; padding-right: 3px; }
        td i { display: inline-block; width: 9px; height: 3px; vertical-align: 2px; border-radius: 1px; background: #3c74c8; box-shadow: inset 0 1px #80b0f0; }
        td:last-child, th:last-child { padding-left: 4px; }
        td.sel { background: #0a0a80; color: #fff; outline: 1px dotted #99c; outline-offset: -2px; }
      </style>
      <div class="tree">
        <div class="node"><button aria-label="Развернуть"></button><i></i><app-icon name="folder"></app-icon><span>Прочие доходы и ра</span></div>
        <c1-scroll></c1-scroll>
      </div>
      <div class="list">
        <table>
          <colgroup><col style="width: 32px"><col style="width: 64px"><col style="width: 152px"><col style="width: 137px"><col style="width: 103px"><col></colgroup>
          <thead><tr><th></th><th>Код</th><th class="sort"><span>Наименование<b></b></span></th><th>Вид прочих дох. и расх.</th><th>Отнесение расхо...</th><th>Принятие к НУ</th></tr></thead>
          <tbody>${rows.map((r, n) => `<tr><td><i></i></td>${r.map((c, k) => `<td${n === 1 && k === 1 ? ' class="sel"' : ""}>${c}</td>`).join("")}</tr>`).join("")}</tbody>
        </table>
        <c1-scroll></c1-scroll>
      </div>
    `;
  }
}

class ItsTabs extends HTMLElement {
  constructor() {
    super();
    this.attachShadow({ mode: "open" });
    this.shadowRoot.innerHTML = `
      <style>
        :host { display: flex; align-items: flex-start; gap: 2px; height: 25px; padding-left: 13px; border-top: 2px solid #807d70; }
        button {
          display: flex;
          align-items: center;
          gap: 2px;
          height: 21px;
          padding: 0 5px 0 4px;
          border: 1px solid #fff;
          border-color: transparent #807d70 #807d70 #fff;
          border-width: 0 2px 2px 1px;
          border-radius: 0 0 4px 4px;
          background: #ece9d8;
          font: inherit;
          white-space: nowrap;
        }
        .on { height: 24px; color: #1414b4; margin-top: -1px; }
      </style>
      <button><app-icon name="v77"></app-icon>1С:Бухгалтерия 7.7</button>
      <button><app-icon name="v77"></app-icon>1С:Комплексная 7.7</button>
      <button class="on"><app-icon name="v81"></app-icon>БП8 р1.6</button>
      <button><app-icon name="v81"></app-icon>УПП8 р1.2, КА8</button>
    `;
  }
}

class XpTaskbar extends HTMLElement {
  constructor() {
    super();
    this.attachShadow({ mode: "open" });
    const quick = ["icq", "itunes", "miranda", "quick", "desk", "utorrent", "earth", "opera"];
    const tasks = [["opera", "Пакеты с логотипом..."], ["computer", "Мой компьютер"], ["its", "ИТС - [Материалы с..."], ["paint", "Материалы_3 - Paint"]];
    this.shadowRoot.innerHTML = `
      <style>
        :host {
          display: flex;
          align-items: stretch;
          height: 30px;
          overflow: hidden;
          color: #fff;
          background: linear-gradient(#3168d5, #4993e6 8%, #245dd7 20%, #2458d8 85%, #1c49b4);
        }
        button { border: 0; font: inherit; color: inherit; white-space: nowrap; }
        .start {
          flex: none;
          display: flex;
          align-items: center;
          width: 95px;
          padding: 0 0 0 9px;
          gap: 5px;
          border-radius: 0 10px 10px 0;
          background: linear-gradient(#5eac56, #3c873c 15%, #3f9a3f 70%, #2f7f2f);
          box-shadow: inset -3px 0 4px #256b25;
          font: italic bold 16px/20px "Open Sans", sans-serif;
          text-shadow: 1px 1px #2a5a2a;
        }
        .quick { flex: none; display: flex; align-items: center; gap: 7px; width: 203px; padding-left: 13px; }
        .quick button { display: flex; padding: 0; background: none; }
        .tasks { flex: none; display: flex; gap: 2px; padding: 4px 0 2px; }
        .tasks button { display: flex; align-items: center; gap: 4px; width: 158px; padding: 0 9px; border-radius: 3px; background: linear-gradient(#5a9cff, #3c81f3 18%, #3c7cf0 85%, #2f67d8); }
        .tasks .on { background: #1e50b8; box-shadow: inset 1px 1px 2px #123a90; }
        .tray { flex: 1; min-width: 0; display: flex; align-items: center; gap: 3px; margin-left: 20px; background: linear-gradient(#0d8bea, #19b0f5 8%, #1290ea 20%, #0f8ee8 85%, #0b70c0); border-left: 1px solid #0a4aa8; }
        .tray > * { flex: none; }
        .tray button { display: flex; align-items: center; justify-content: center; width: 17px; height: 17px; padding: 0; margin-left: -9px; border-radius: 50%; background: #2a8cf0; box-shadow: inset 0 0 1px 1px #9cd0ff; }
        .tray b { padding: 0 2px; background: #08088c; font: 12px/17px "Liberation Sans", sans-serif; }
      </style>
      <button class="start"><app-icon name="windows"></app-icon>пуск</button>
      <div class="quick">${quick.map((n) => `<button aria-label="${n}"><app-icon name="${n}"></app-icon></button>`).join("")}</div>
      <div class="tasks">${tasks.map(([n, t], i) => `<button${i === 2 ? ' class="on"' : ""}><app-icon name="${n}"></app-icon>${t}</button>`).join("")}</div>
      <div class="tray">
        <button aria-label="Показать"><svg width="9" height="9"><path d="M6 1L3 4l3 4" fill="none" stroke="#fff" stroke-width="2"/></svg></button>
        ${["usb", "target", "nodes", "xbox", "shell"].map((n) => `<app-icon name="${n}" size="15"></app-icon>`).join("")}
        <b>F</b>
      </div>
    `;
  }
}

customElements.define("app-icon", AppIcon);
customElements.define("c1-scroll", C1Scroll);
customElements.define("c1-check", C1Check);
customElements.define("c1-field", C1Field);
customElements.define("c1-tool", C1Tool);
customElements.define("c1-tools", C1Tools);
customElements.define("c1-window", C1Window);
customElements.define("invoice-form", InvoiceForm);
customElements.define("income-list", IncomeList);
customElements.define("demo-screen", DemoScreen);
customElements.define("its-article", ItsArticle);
customElements.define("its-tabs", ItsTabs);
customElements.define("its-toolbar", ItsToolbar);
customElements.define("its-window", ItsWindow);
customElements.define("xp-taskbar", XpTaskbar);
customElements.define("its-desktop", ItsDesktop);
</script>
</body>
</html>
